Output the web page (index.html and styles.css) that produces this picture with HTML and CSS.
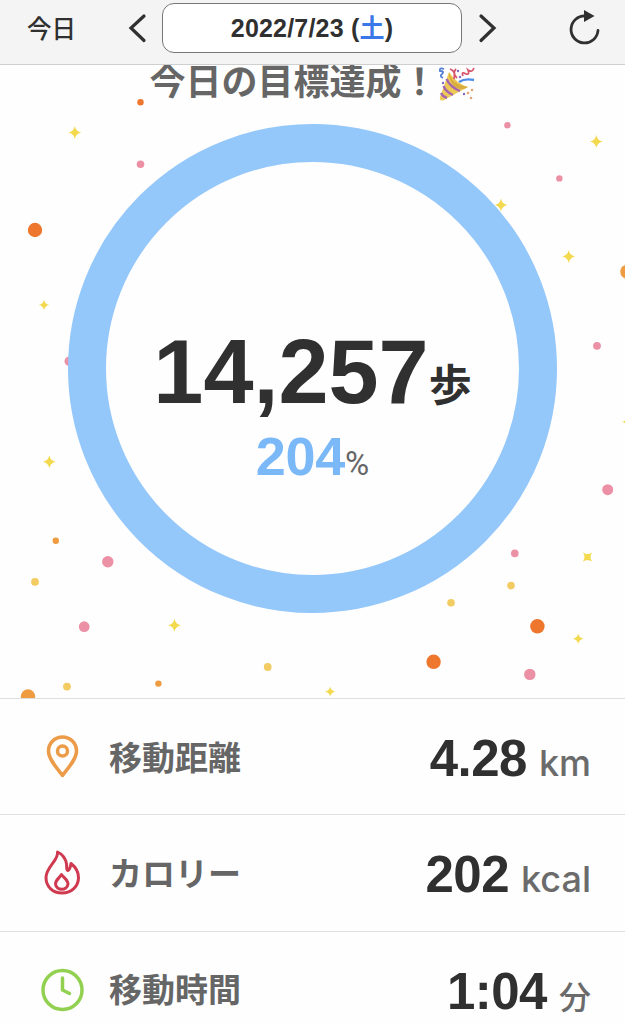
FILE: index.html
```
<!DOCTYPE html>
<html lang="ja">
<head>
    <meta charset="UTF-8">
    <meta name="viewport" content="width=device-width, initial-scale=1.0">
    <title>歩数計</title>
    <link rel="stylesheet" href="styles.css">
</head>
<body>
    <!-- Date navigation -->
    <header class="toolbar">
        <span class="today">今日</span>
        <svg class="arrow" width="20" height="30" viewBox="0 0 20 30"><path d="M17 3 L4 15 L17 27.5"/></svg>
        <div class="date-box"><span>2022/7/23 (<span class="saturday">土</span>)</span></div>
        <svg class="arrow" width="20" height="30" viewBox="0 0 20 30"><path d="M4 3 L17 15 L4 27.5"/></svg>
        <svg class="reload" width="34" height="38" viewBox="0 0 34 38">
            <path class="reload-arc" d="M18.5 7 A13.5 13.5 0 1 0 31 21.5"/>
            <path class="reload-head" d="M17 1 L27.5 7 L17 13 Z"/>
        </svg>
    </header>

    <!-- Steps and goal -->
    <section class="goal">
        <svg class="confetti" width="625" height="633" viewBox="0 65 625 633">
            <defs>
                <path id="star" d="M0 -6.5 Q1 -1 6.5 0 Q1 1 0 6.5 Q-1 1 -6.5 0 Q-1 -1 0 -6.5 Z"/>
            </defs>
            <g fill="#ee762d">
                <circle cx="140.5" cy="102.3" r="3.2"/>
                <circle cx="35" cy="230" r="7.2"/>
                <circle cx="537.4" cy="626.3" r="7.2"/>
                <circle cx="433.6" cy="661.8" r="7.2"/>
            </g>
            <g fill="#ef9b3f">
                <circle cx="627.5" cy="271.7" r="7.2"/>
                <circle cx="55.8" cy="540.8" r="3.2"/>
                <circle cx="158.4" cy="683.6" r="3.2"/>
                <circle cx="28" cy="696.5" r="7.2"/>
            </g>
            <g fill="#ec90a6">
                <circle cx="140.5" cy="164.3" r="3.8"/>
                <circle cx="507.4" cy="125.2" r="3.2"/>
                <circle cx="559.4" cy="178.4" r="3.2"/>
                <circle cx="597" cy="345.8" r="3.9"/>
                <circle cx="69" cy="361.3" r="4.5"/>
                <circle cx="607.7" cy="489.7" r="5.5"/>
                <circle cx="514.8" cy="553.4" r="3.8"/>
                <circle cx="107.8" cy="561.7" r="5.7"/>
                <circle cx="84.2" cy="626.7" r="5.4"/>
                <circle cx="529.8" cy="674.4" r="5.7"/>
            </g>
            <g fill="#f2cb62">
                <circle cx="35" cy="581.8" r="3.9"/>
                <circle cx="511" cy="585.6" r="3.8"/>
                <circle cx="451" cy="602.8" r="3.8"/>
                <circle cx="267.7" cy="667" r="3.9"/>
                <circle cx="67" cy="686.6" r="3.9"/>
            </g>
            <g fill="#f3d94d">
                <use href="#star" x="74.8" y="132.5"/>
                <use href="#star" x="596.3" y="141.5"/>
                <use href="#star" transform="translate(44 305) scale(.8)"/>
                <use href="#star" x="568.7" y="256.5"/>
                <use href="#star" transform="translate(627 421.8) scale(.8)"/>
                <use href="#star" x="49.3" y="461.8"/>
                <use href="#star" transform="translate(587.5 557) rotate(45)"/>
                <use href="#star" x="174.5" y="625.2"/>
                <use href="#star" transform="translate(578.2 638.7) scale(.8)"/>
                <use href="#star" transform="translate(330.2 691.6) scale(.8)"/>
            </g>
            <circle cx="312.5" cy="368.5" r="225.5" fill="none" stroke="#94c7fa" stroke-width="38"/>
            <use href="#star" x="501" y="205" fill="#f3d94d"/>
        </svg>

        <h1 class="goal-title">
            <span>今日の目標達成！</span>
            <svg class="popper" width="38" height="37" viewBox="0 0 38 37">
                <path d="M11 6 L2 31 Q1 36 6 34 L30 21 Q19 18 11 6 Z" fill="#edca55"/>
                <path d="M11 6 Q13 18 30 21 Q22 26 16 20 Q10 13 11 6 Z" fill="#d9ae40"/>
                <path d="M8.5 13 Q12 21 22 25 M5.5 20 Q8 26 15 29 M3 27 Q5 31 9 32" fill="none" stroke="#a667ae" stroke-width="2.4"/>
                <path d="M6 3 Q1 1 2 5 Q7 5 4 8 Q1 10 5 12" fill="none" stroke="#527dd6" stroke-width="1.8"/>
                <path d="M21 16 Q27 12 36 14" fill="none" stroke="#4d8ce8" stroke-width="2.4"/>
                <path d="M12 3 Q18 5 16 13 M18 3 Q14 7 19 12 M25 10 Q23 5 28 8 Q32 9 30 4 Q34 7 36 2" fill="none" stroke="#d9576d" stroke-width="1.8"/>
                <g fill="#8067c3"><circle cx="20" cy="5" r="1.2"/><circle cx="22" cy="11" r="1.2"/><circle cx="26" cy="28" r="1.2"/><circle cx="5" cy="17" r="1.2"/></g>
                <g fill="#e3a574"><circle cx="34" cy="24" r="1.3"/><circle cx="30" cy="27" r="1.3"/><circle cx="33" cy="32" r="1.3"/></g>
            </svg>
        </h1>

        <div class="progress">
            <div class="steps">14,257<span class="steps-unit">歩</span></div>
            <div class="percent">204<span class="percent-unit">%</span></div>
        </div>
    </section>

    <!-- Daily totals -->
    <ul class="stats">
        <li class="stat">
            <svg class="icon distance" width="44" height="46" viewBox="0 0 44 46">
                <path d="M22.5 41.5 C17.5 34.5 8.5 25.5 8.5 17 A14 14 0 0 1 36.5 17 C36.5 25.5 27.5 34.5 22.5 41.5 Z"/>
                <circle cx="22.5" cy="17" r="5"/>
            </svg>
            <span class="stat-label">移動距離</span>
            <span class="stat-value">4.28<span class="unit">km</span></span>
        </li>
        <li class="stat">
            <svg class="icon calorie" width="44" height="46" viewBox="0 0 44 46">
                <path d="M17.5 2 C19 10 6 17 6 27.5 C6 37 13 43 22 43 C31.5 43 38.5 36.5 38.5 27.5 C38.5 22 36 17.5 31 13.5 C30.5 16 30.5 19 28 20.5 C26 20 27 17 26.5 14 C25.5 8 22 4 17.5 2 Z"/>
                <path d="M21.5 24.5 C19 28.5 15.5 30 15.5 34 A6.3 6 0 0 0 28 34 C28 30 24 28 21.5 24.5 Z"/>
            </svg>
            <span class="stat-label">カロリー</span>
            <span class="stat-value">202<span class="unit">kcal</span></span>
        </li>
        <li class="stat">
            <svg class="icon time" width="44" height="46" viewBox="0 0 44 46">
                <circle cx="22.5" cy="24" r="19.5"/>
                <path d="M22.5 12 V24 L29.5 27.5"/>
            </svg>
            <span class="stat-label">移動時間</span>
            <span class="stat-value">1:04<span class="unit minutes">分</span></span>
        </li>
    </ul>
</body>
</html>
```
FILE: styles.css
```
* {
    box-sizing: border-box;
}

body {
    font-family: "Liberation Sans", "Noto Sans CJK JP", sans-serif;
    margin: 0;
    height: 1024px;
    overflow: hidden;
    background-color: #fefefe;
    color: #303030;
}

.toolbar {
    display: flex;
    align-items: center;
    height: 65px;
    padding: 0 24px 9px 27px;
    background-color: #f4f4f4;
    border-bottom: 1px solid #cfcfcf;
}

.today {
    width: 49px;
    margin-right: 51px;
    font-size: 24.5px;
    font-weight: 500;
    white-space: nowrap;
}

.arrow {
    fill: none;
    stroke: #303030;
    stroke-width: 3.2;
    stroke-linecap: round;
}

.date-box {
    display: flex;
    align-items: center;
    justify-content: center;
    width: 300px;
    height: 50px;
    margin: 0 15px;
    background-color: #fff;
    border: 1.5px solid #777;
    border-radius: 12px;
    font-size: 25px;
    font-weight: bold;
    line-height: 30px;
    letter-spacing: 0.2px;
}

.saturday {
    color: #3b78e7;
}

.reload {
    margin-left: auto;
}

.reload-arc {
    fill: none;
    stroke: #303030;
    stroke-width: 2.8;
    stroke-linecap: round;
}

.reload-head {
    fill: #303030;
}

.goal {
    position: relative;
    height: 633px;
    overflow: hidden;
}

.confetti {
    position: absolute;
    top: 0;
    left: 0;
}

.goal-title {
    position: relative;
    display: flex;
    justify-content: center;
    margin: 0;
    height: 40px;
    font-size: 36px;
    line-height: 35px;
    color: #666;
}

.popper {
    margin-top: 1px;
}

.progress {
    position: relative;
    margin-top: 216px;
    text-align: center;
    white-space: nowrap;
}

.steps {
    height: 104px;
    font-size: 90px;
    font-weight: bold;
    line-height: 102px;
}

.steps-unit {
    font-size: 43px;
    line-height: 1;
    vertical-align: 2px;
}

.percent {
    height: 62px;
    font-size: 54px;
    font-weight: bold;
    line-height: 62px;
    letter-spacing: -0.3px;
    color: #7ab8f8;
}

.percent-unit {
    font-family: Roboto, sans-serif;
    font-size: 33px;
    font-weight: normal;
    line-height: 1;
    letter-spacing: 0;
    color: #666;
}

.stats {
    list-style: none;
    margin: 0;
    padding: 0;
}

.stat {
    display: flex;
    align-items: center;
    height: 116.3px;
    padding: 0 34px 0 40px;
    border-top: 1px solid #dedede;
}

.icon {
    fill: none;
    stroke-width: 3.5;
    stroke-linecap: round;
    stroke-linejoin: round;
}

.distance {
    stroke: #ec9b48;
}

.calorie {
    stroke: #d03a50;
    stroke-width: 3;
}

.time {
    stroke: #92d050;
}

.stat-label {
    margin-left: 25px;
    padding-top: 4px;
    font-size: 33px;
    font-weight: bold;
    line-height: 40px;
    color: #666;
}

.stat-value {
    margin-left: auto;
    padding-top: 5px;
    font-size: 51px;
    font-weight: bold;
    line-height: 60px;
    letter-spacing: -0.5px;
}

.unit {
    margin-left: 12px;
    font-family: Inter, "Noto Sans CJK JP", sans-serif;
    font-size: 36px;
    font-weight: 500;
    line-height: 1;
    letter-spacing: 0;
    color: #6b6b6b;
}

.minutes {
    font-size: 32px;
}
```
